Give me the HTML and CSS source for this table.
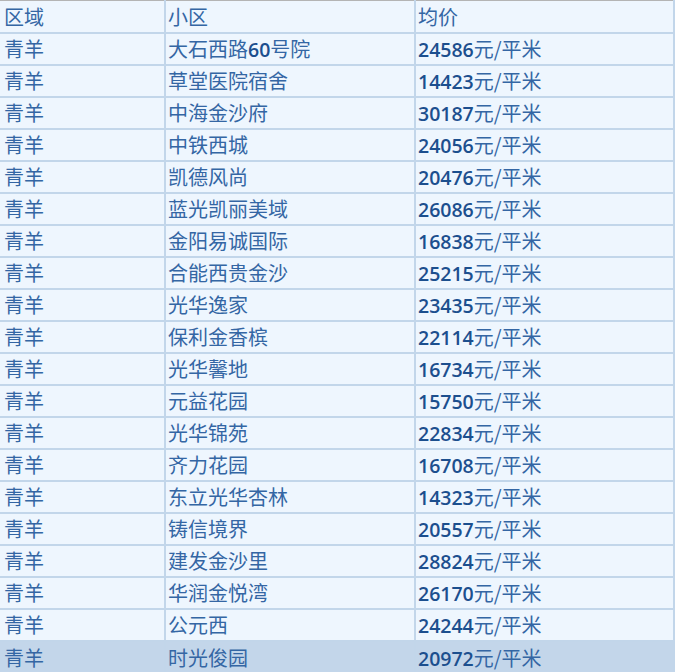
FILE: index.html
```html
<!DOCTYPE html>
<html lang="zh-CN">
<head>
<meta charset="utf-8">
<title>青羊小区均价</title>
<link rel="stylesheet" href="styles.css">
</head>
<body>
<table class="price-table">
  <colgroup><col class="c-area"><col class="c-name"><col class="c-price"></colgroup>
  <thead>
    <tr><th>区域</th><th>小区</th><th>均价</th></tr>
  </thead>
  <tbody>
    <tr><td>青羊</td><td>大石西路<span class="num">60</span>号院</td><td><span class="num">24586</span>元/平米</td></tr>
    <tr><td>青羊</td><td>草堂医院宿舍</td><td><span class="num">14423</span>元/平米</td></tr>
    <tr><td>青羊</td><td>中海金沙府</td><td><span class="num">30187</span>元/平米</td></tr>
    <tr><td>青羊</td><td>中铁西城</td><td><span class="num">24056</span>元/平米</td></tr>
    <tr><td>青羊</td><td>凯德风尚</td><td><span class="num">20476</span>元/平米</td></tr>
    <tr><td>青羊</td><td>蓝光凯丽美域</td><td><span class="num">26086</span>元/平米</td></tr>
    <tr><td>青羊</td><td>金阳易诚国际</td><td><span class="num">16838</span>元/平米</td></tr>
    <tr><td>青羊</td><td>合能西贵金沙</td><td><span class="num">25215</span>元/平米</td></tr>
    <tr><td>青羊</td><td>光华逸家</td><td><span class="num">23435</span>元/平米</td></tr>
    <tr><td>青羊</td><td>保利金香槟</td><td><span class="num">22114</span>元/平米</td></tr>
    <tr><td>青羊</td><td>光华馨地</td><td><span class="num">16734</span>元/平米</td></tr>
    <tr><td>青羊</td><td>元益花园</td><td><span class="num">15750</span>元/平米</td></tr>
    <tr><td>青羊</td><td>光华锦苑</td><td><span class="num">22834</span>元/平米</td></tr>
    <tr><td>青羊</td><td>齐力花园</td><td><span class="num">16708</span>元/平米</td></tr>
    <tr><td>青羊</td><td>东立光华杏林</td><td><span class="num">14323</span>元/平米</td></tr>
    <tr><td>青羊</td><td>铸信境界</td><td><span class="num">20557</span>元/平米</td></tr>
    <tr><td>青羊</td><td>建发金沙里</td><td><span class="num">28824</span>元/平米</td></tr>
    <tr><td>青羊</td><td>华润金悦湾</td><td><span class="num">26170</span>元/平米</td></tr>
    <tr><td>青羊</td><td>公元西</td><td><span class="num">24244</span>元/平米</td></tr>
    <tr class="active"><td>青羊</td><td>时光俊园</td><td><span class="num">20972</span>元/平米</td></tr>
  </tbody>
</table>
</body>
</html>
```

FILE: styles.css
```css
html, body {
  margin: 0;
  padding: 0;
  background: #ffffff;
}

.price-table {
  width: 674px;
  table-layout: fixed;
  border-collapse: collapse;
  border-top: 1px solid #b4b4b4;
  font-family: "Noto Sans CJK SC", sans-serif;
  font-size: 20px;
  color: #3466a4;
}

.c-area { width: 165px; }
.c-name { width: 250px; }
.c-price { width: 259px; }

.price-table th,
.price-table td {
  height: 30px;
  box-sizing: border-box;
  padding: 1px 0 0 2px;
  font-weight: 400;
  text-align: left;
  vertical-align: middle;
  line-height: 24px;
  background: #eef6fe;
  border-right: 2px solid #c2d6ea;
  border-bottom: 2px solid #c2d6ea;
  white-space: nowrap;
  overflow: hidden;
}

.price-table tr {
  height: 32px;
}

.price-table th:first-child,
.price-table td:first-child {
  padding-left: 4px;
}

.price-table tr.active td {
  background: #c3d6ea;
  border-bottom: none;
}

.num {
  font-family: "Open Sans", sans-serif;
  font-weight: 600;
  font-size: 19.5px;
  line-height: 1;
  color: #1c4f8e;
}
```
